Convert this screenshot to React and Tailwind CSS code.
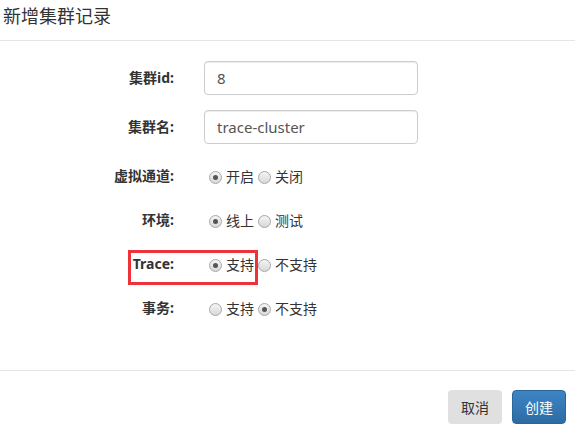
import React from "react";

const font = { fontFamily: '"Noto Sans", "Noto Sans CJK SC", sans-serif' };

const Radio = ({ checked, label }) => (
  <label className="flex items-center gap-[4px] text-[14px] text-[#333] leading-[20px]">
    <span className="w-[13px] h-[13px] rounded-full border border-[#a8a8a8] bg-gradient-to-b from-[#f4f4f4] to-[#d8d8d8] flex items-center justify-center">
      {checked && <span className="w-[5px] h-[5px] rounded-full bg-[#555]" />}
    </span>
    <span>{label}</span>
  </label>
);

const FieldRow = ({ label, children, className = "" }) => (
  <div className={"flex items-start " + className}>
    <div className="w-[175px] pr-[1px] text-right font-bold text-[14px] text-[#333] leading-[20px] pt-[7px]">
      {label}
    </div>
    <div className="ml-[29px]">{children}</div>
  </div>
);

const RadioGroup = ({ options, value }) => (
  <div className="flex items-center gap-[4px] pt-[8px] pl-[5px]">
    {options.map((o) => (
      <Radio key={o} label={o} checked={o === value} />
    ))}
  </div>
);

const App = () => {
  return (
    <div className="w-[575px] h-[430px] bg-white flex flex-col" style={font}>
      {/* header */}
      <div className="h-[41px] border-b border-[#e5e5e5] pl-[3px] pt-[2px]">
        <h4 className="text-[18px] text-[#333] leading-[28px]">新增集群记录</h4>
      </div>

      {/* body */}
      <div className="flex-1 pt-[20px] flex flex-col">
        <FieldRow label="集群id:" className="mb-[15px]">
          <input
            readOnly
            value="8"
            className="w-[214px] h-[34px] border border-[#ccc] rounded-[4px] px-[12px] text-[15px] text-[#555] outline-none shadow-[inset_0_1px_1px_rgba(0,0,0,0.075)]"
          />
        </FieldRow>
        <FieldRow label="集群名:" className="mb-[15px]">
          <input
            readOnly
            value="trace-cluster"
            className="w-[214px] h-[34px] border border-[#ccc] rounded-[4px] px-[12px] text-[15px] text-[#555] outline-none shadow-[inset_0_1px_1px_rgba(0,0,0,0.075)]"
          />
        </FieldRow>
        <FieldRow label="虚拟通道:" className="h-[44px]">
          <RadioGroup options={["开启", "关闭"]} value="开启" />
        </FieldRow>
        <FieldRow label="环境:" className="h-[44px]">
          <RadioGroup options={["线上", "测试"]} value="线上" />
        </FieldRow>
        <div className="relative">
          <FieldRow label="Trace:" className="h-[44px]">
            <RadioGroup options={["支持", "不支持"]} value="支持" />
          </FieldRow>
          {/* annotation box */}
          <div className="absolute left-[128px] top-[3px] w-[130px] h-[35px] border-[3px] border-[#ee3338] pointer-events-none" />
        </div>
        <FieldRow label="事务:" className="h-[44px]">
          <RadioGroup options={["支持", "不支持"]} value="不支持" />
        </FieldRow>
      </div>

      {/* footer */}
      <div className="h-[60px] border-t border-[#e5e5e5] flex justify-end items-start pt-[19px] pr-[9px] gap-[10px]">
        <button className="w-[54px] h-[34px] rounded-[4px] bg-[#e0e0e0] text-[14px] text-[#333]">
          取消
        </button>
        <button className="w-[54px] h-[34px] rounded-[4px] bg-gradient-to-b from-[#3d85c6] to-[#2d6ca2] border border-[#2b669a] text-[14px] text-white">
          创建
        </button>
      </div>
    </div>
  );
};

export default App;
